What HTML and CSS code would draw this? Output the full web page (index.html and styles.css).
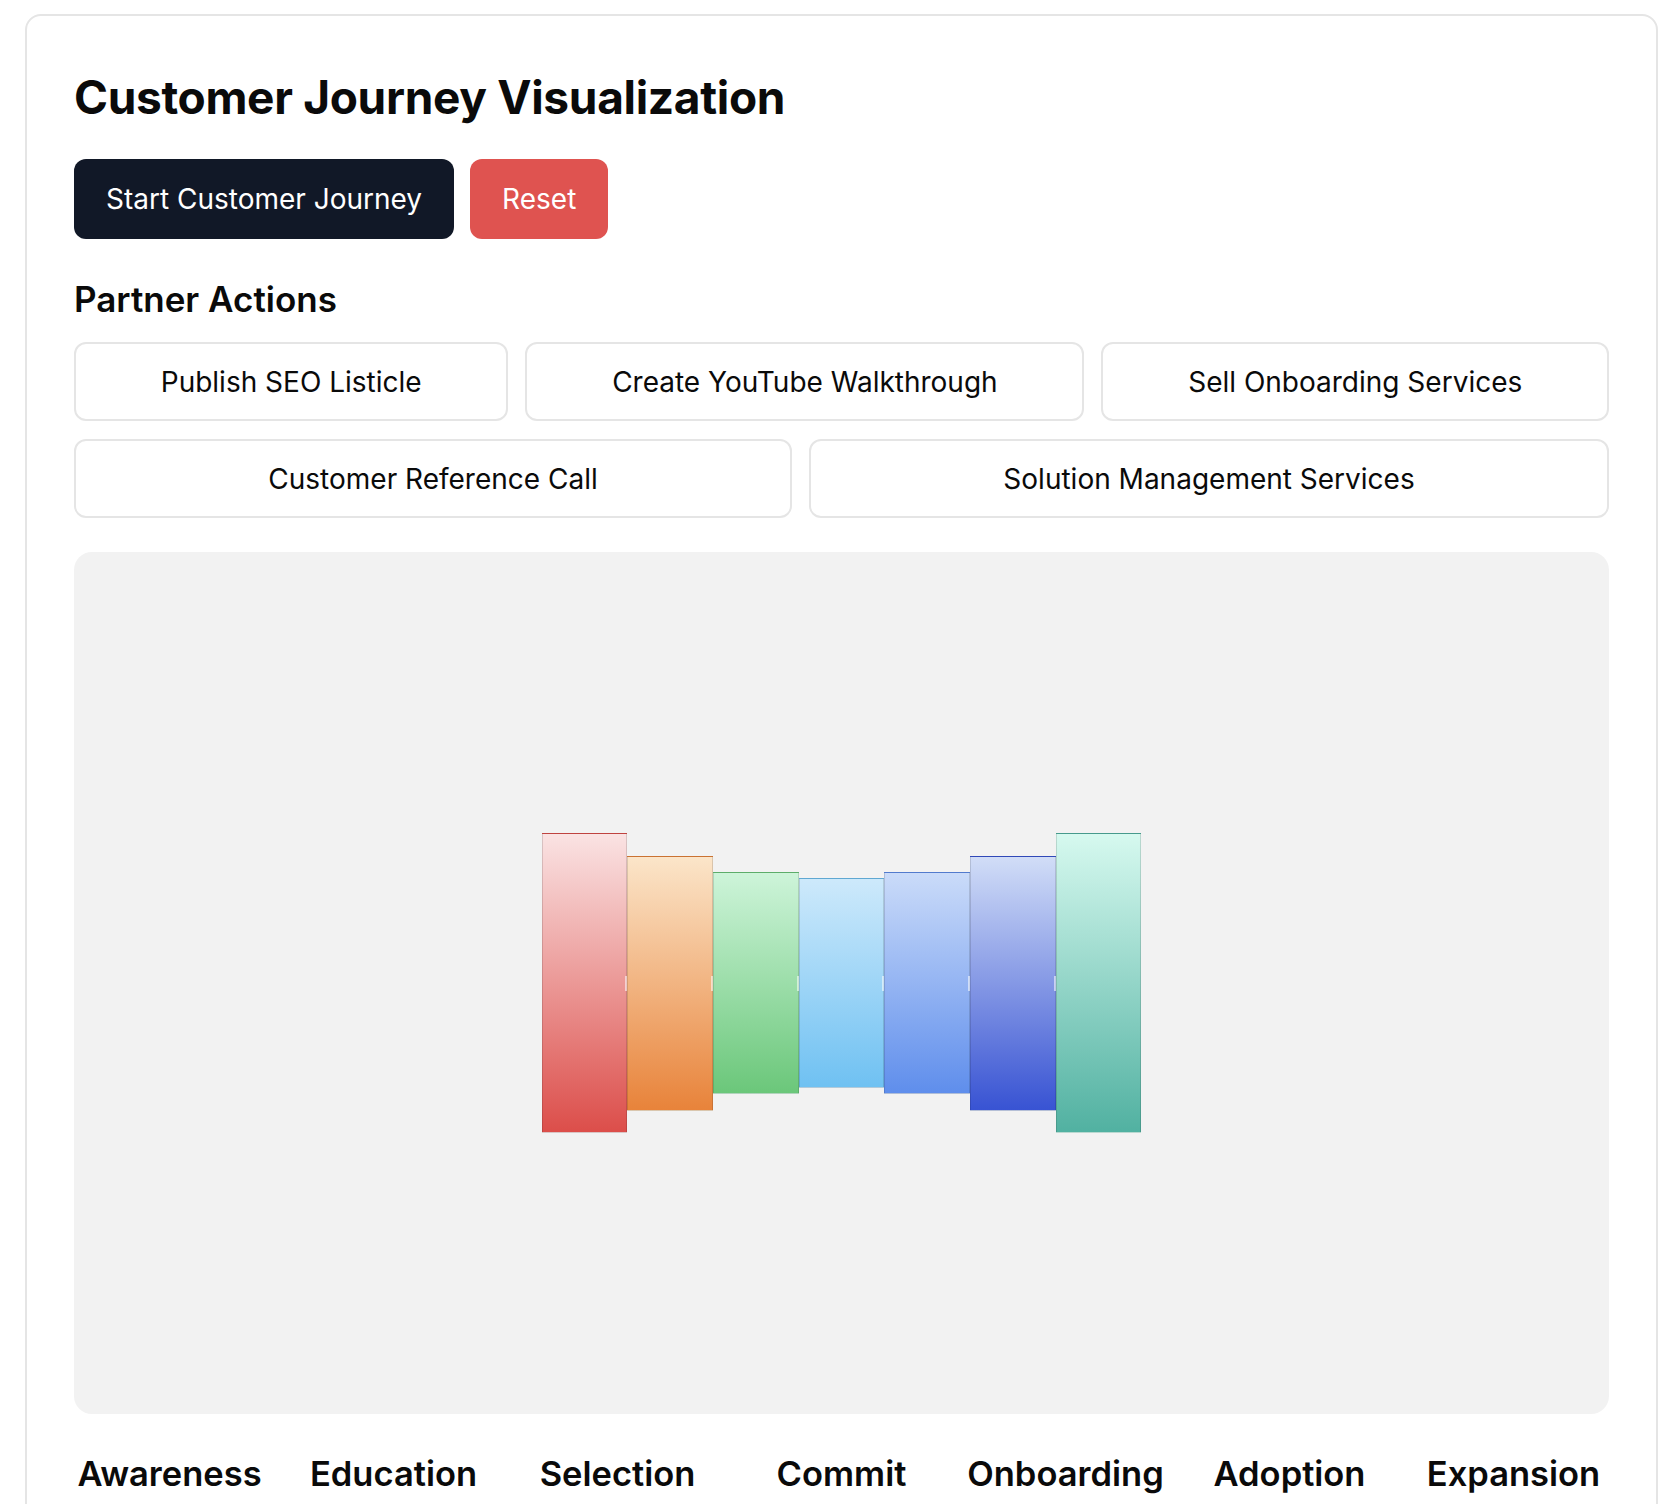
FILE: index.html
```html
<!DOCTYPE html>
<html lang="en">
<head>
<meta charset="utf-8">
<title>Customer Journey Visualization</title>
<link rel="stylesheet" href="styles.css">
</head>
<body>
<div class="card">
  <h1 class="title">Customer Journey Visualization</h1>
  <div class="controls">
    <button class="btn btn-primary">Start Customer Journey</button>
    <button class="btn btn-danger">Reset</button>
  </div>
  <h2 class="subtitle">Partner Actions</h2>
  <div class="actions">
    <div class="action-row">
      <button class="action">Publish SEO Listicle</button>
      <button class="action">Create YouTube Walkthrough</button>
      <button class="action">Sell Onboarding Services</button>
    </div>
    <div class="action-row">
      <button class="action">Customer Reference Call</button>
      <button class="action">Solution Management Services</button>
    </div>
  </div>
  <div class="canvas">
    <div class="bars">
      <div class="bar bar-1"><span class="joint"></span></div>
      <div class="bar bar-2"><span class="joint"></span></div>
      <div class="bar bar-3"><span class="joint"></span></div>
      <div class="bar bar-4"><span class="joint"></span></div>
      <div class="bar bar-5"><span class="joint"></span></div>
      <div class="bar bar-6"><span class="joint"></span></div>
      <div class="bar bar-7"></div>
    </div>
  </div>
  <div class="stages">
    <div class="stage">Awareness</div>
    <div class="stage">Education</div>
    <div class="stage">Selection</div>
    <div class="stage">Commit</div>
    <div class="stage">Onboarding</div>
    <div class="stage">Adoption</div>
    <div class="stage">Expansion</div>
  </div>
</div>
</body>
</html>
```

FILE: styles.css
```css
* { box-sizing: border-box; }

html, body {
  margin: 0;
  padding: 0;
  background: #ffffff;
  font-family: Inter, "Noto Sans", "Liberation Sans", sans-serif;
  color: #0a0a0a;
  overflow: hidden;
}

.card {
  margin: 14px 0 0 25px;
  width: 1633px;
  min-height: 1600px;
  border: 2px solid #e5e5e5;
  border-radius: 16px;
  padding: 53px 47px 40px 47px;
  background: #fff;
}

.title {
  margin: 0;
  font-size: 46px;
  line-height: 56px;
  font-weight: 700;
  letter-spacing: -0.32px;
}

.controls {
  display: flex;
  gap: 16px;
  margin-top: 34px;
}

.btn {
  height: 80px;
  padding: 0 32px;
  border: none;
  border-radius: 12px;
  font-family: inherit;
  font-size: 28px;
  font-weight: 400;
  color: #ffffff;
}

.btn-primary { background: #111827; }
.btn-danger { background: #df5350; }

.subtitle {
  margin: 38px 0 0 0;
  font-size: 35px;
  line-height: 44px;
  font-weight: 600;
  letter-spacing: 0;
}

.actions {
  margin-top: 21px;
  display: flex;
  flex-direction: column;
  gap: 18px;
}

.action-row {
  display: flex;
  gap: 17px;
}

.action {
  flex: 1 1 auto;
  height: 79px;
  padding: 0 32px;
  background: #fff;
  border: 2px solid #e5e5e5;
  border-radius: 12px;
  font-family: inherit;
  font-size: 28px;
  color: #0a0a0a;
}

.canvas {
  margin-top: 34px;
  height: 862px;
  background: #f2f2f2;
  border-radius: 18px;
  display: flex;
  align-items: center;
  justify-content: center;
}

.bars {
  display: flex;
  align-items: center;
}

.bar {
  position: relative;
  width: 85.714px;
  border: 1px solid rgba(0, 0, 0, 0.13);
}

.joint {
  position: absolute;
  right: -2px;
  top: 50%;
  width: 3px;
  height: 15px;
  margin-top: -7px;
  background: rgba(255, 255, 255, 0.55);
}

.bar-1 { height: 300px; background: linear-gradient(#fae3e3, #dc4e4a); }
.bar-2 { height: 255px; background: linear-gradient(#fbe5c9, #e8833a); }
.bar-3 { height: 222px; background: linear-gradient(#cdf4d9, #6bc77a); }
.bar-4 { height: 210px; background: linear-gradient(#cde9fb, #6fc1f2); }
.bar-5 { height: 222px; background: linear-gradient(#cadbf9, #5f8eec); }
.bar-6 { height: 255px; background: linear-gradient(#d1ddf7, #3853d3); }
.bar-7 { height: 300px; background: linear-gradient(#d6f9ef, #51b1a1); }

.stages {
  display: flex;
  justify-content: center;
  margin-top: 38px;
}

.stage {
  flex: 0 0 224px;
  text-align: center;
  font-size: 34.5px;
  line-height: 44px;
  font-weight: 600;
  letter-spacing: 0;
}
```
